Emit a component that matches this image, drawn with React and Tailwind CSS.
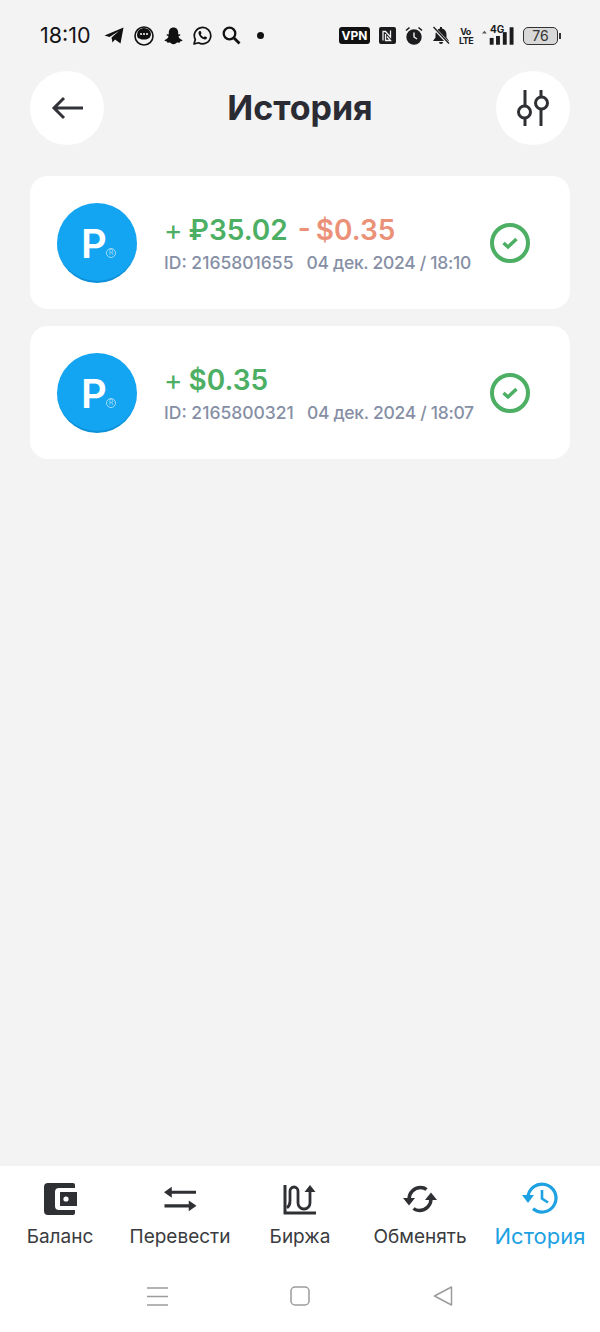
const dark = "#2f3034";

function Telegram() {
  return (
    <svg width="20" height="17" viewBox="0 0 20 17">
      <path d="M0.5 8.500 19.500 0.500 16.500 16.500 11 12.500 8.500 15.500 7.500 10.500 15 4 5.500 10Z" fill="#111" />
    </svg>
  );
}
function ChatBubble() {
  return (
    <svg width="20" height="20" viewBox="0 0 20 20">
      <circle cx="10" cy="10" r="9" fill="none" stroke="#111" strokeWidth="1.600" />
      <path d="M3 9a7 6.500 0 0 1 14-1c0 3-2 5-5 5.400-2.500.4-5 .2-6.500-1C4 12.500 3 11 3 9Z" fill="#111" />
      <circle cx="7" cy="8" r="1" fill="#fff" />
      <circle cx="10" cy="8" r="1" fill="#fff" />
      <circle cx="13" cy="8" r="1" fill="#fff" />
    </svg>
  );
}
function Snap() {
  return (
    <svg width="19" height="18" viewBox="0 0 19 18">
      <path d="M9.500 .5c3 0 4.700 2.200 4.700 5v2l1.600-.3c.7 0 .8.900.2 1.200l-1.500.8c.4 1.700 1.700 3 3.700 3.700.5.300.3.900-.3 1l-1.800.5-.5 1.300-2.200-.2c-1.100.2-2 1.800-3.900 1.800s-2.800-1.600-3.900-1.800l-2.200.2-.5-1.300-1.800-.5c-.6-.1-.8-.7-.3-1 2-.7 3.300-2 3.700-3.700l-1.500-.8c-.6-.3-.5-1.200.2-1.200l1.600.3v-2c0-2.800 1.700-5 4.700-5Z" fill="#111" />
    </svg>
  );
}
function WhatsApp() {
  return (
    <svg width="19" height="19" viewBox="0 0 19 19">
      <path d="M1 18l1.300-4.500A8.200 8.200 0 1 1 5.500 16.800Z" fill="none" stroke="#111" strokeWidth="1.700" strokeLinejoin="round" />
      <path d="M6.500 5c-.8.500-1.200 1.500-.9 2.800.6 2.400 2.800 4.800 5.300 5.500 1.300.4 2.400 0 2.900-.9l.2-1.100-2.200-1.100-1 1.100c-1.300-.5-2.500-1.700-3.100-3l.9-1-1-2.300Z" fill="#111" />
    </svg>
  );
}
function Search() {
  return (
    <svg width="19" height="19" viewBox="0 0 19 19" fill="none" stroke="#111">
      <circle cx="7.500" cy="7.500" r="5.800" strokeWidth="2.300" />
      <path d="M12 12l5.500 5.500" strokeWidth="2.800" />
    </svg>
  );
}
function NfcIcon() {
  return (
    <svg width="17" height="17" viewBox="0 0 17 17">
      <rect width="17" height="17" rx="2" fill="#1c1c1e" />
      <path d="M4 13.500V4.500h2.500l5 5.500V3.500M6.500 7v6.500h5L8 9.500" fill="none" stroke="#f3f3f4" strokeWidth="1.300" />
    </svg>
  );
}
function Alarm() {
  return (
    <svg width="18" height="19" viewBox="0 0 18 19">
      <circle cx="9" cy="11" r="7.700" fill="#1c1c1e" />
      <path d="M1 4.500 4.500 1.500M17 4.500 13.500 1.500" stroke="#1c1c1e" strokeWidth="1.600" />
      <path d="M9 6.500V11l3 2" fill="none" stroke="#f3f3f4" strokeWidth="1.400" />
    </svg>
  );
}
function BellOff() {
  return (
    <svg width="18" height="19" viewBox="0 0 18 19">
      <path d="M8 1h2v1.500c3 .7 4.500 3 4.500 6v3l2.500 3.500H1l2.500-3.500v-3c0-3 1.500-5.300 4.500-6Z" fill="#1c1c1e" />
      <path d="M7 16h4a2 2 0 0 1-4 0Z" fill="#1c1c1e" />
      <path d="M1.500 1.500l15 16" stroke="#f3f3f4" strokeWidth="3.200" />
      <path d="M1.500 1l15.500 16.500" stroke="#1c1c1e" strokeWidth="1.300" />
    </svg>
  );
}
function Signal() {
  return (
    <svg width="33" height="18" viewBox="0 0 34 18">
      <path d="M1 6.500 3.500 3.500 6 6.500Z" fill="#555" />
      <rect x="9" y="11" width="4" height="7" fill="#1c1c1e" />
      <rect x="15.500" y="9" width="4" height="9" fill="#1c1c1e" />
      <rect x="22.500" y="5" width="4" height="13" fill="#1c1c1e" />
      <rect x="29.500" y="0" width="4" height="18" fill="#1c1c1e" />
    </svg>
  );
}
function Wallet() {
  return (
    <svg width="33" height="32" viewBox="0 0 33 32">
      <path d="M4 0h25a2 2 0 0 1 2 2v3H15a4 4 0 0 0-4 4v14a4 4 0 0 0 4 4h16v3a2 2 0 0 1-2 2H4a4 4 0 0 1-4-4V4a4 4 0 0 1 4-4Z" fill={dark} />
      <path d="M16 9h17v14H16Z" fill={dark} />
      <circle cx="22" cy="16" r="2.600" fill="#fff" />
    </svg>
  );
}
function Transfer() {
  return (
    <svg width="33" height="28" viewBox="0 0 34 28" fill={dark}>
      <path d="M0 7 8 1.500v4h25v3.200H8v4Z" />
      <path d="M33.500 21 25.500 15.500v4H.5v3.200h25v4Z" />
    </svg>
  );
}
function Exchange() {
  return (
    <svg width="34" height="31" viewBox="0 0 34 31" fill="none" stroke={dark} strokeWidth="2.800">
      <path d="M2 1v28h31" strokeWidth="3" />
      <path d="M4 24c2-1.500 3-4 3-7V7a4 4 0 0 1 8 0v12a6 6 0 0 0 12 0V6" />
      <path d="M21.500 8 27 1l5.500 7Z" fill={dark} stroke="none" />
    </svg>
  );
}
function Swap() {
  return (
    <svg width="36" height="30" viewBox="0 0 36 30" fill="none" stroke={dark} strokeWidth="3.400">
      <path d="M7 15c0-6 5-11.500 11.500-11.500 2.500 0 4.500.7 6 2" />
      <path d="M29 15c0 6-5 11.500-11.500 11.500-2.500 0-4.500-.7-6-2" />
      <path d="M1 15h12l-6 7.500Z" fill={dark} stroke="none" transform="translate(0 -1)" />
      <path d="M23 15h12l-6-7.500Z" fill={dark} stroke="none" transform="translate(0 1)" />
    </svg>
  );
}
function HistoryIcon() {
  return (
    <svg className="-mt-[3px]" width="36" height="32" viewBox="0 0 36 32" fill="none" stroke="#1da1e3" strokeWidth="3.200">
      <path d="M6 16a14 14 0 1 1 5 10.800" />
      <path d="M0 13h12l-6 8Z" fill="#1da1e3" stroke="none" />
      <path d="M20 8v8.500l6 4" strokeWidth="2.600" />
    </svg>
  );
}
function SoftKeys() {
  return (
    <div className="h-[66px] flex items-start pt-[20px] pl-[147px]">
      <svg width="21" height="21" viewBox="0 0 21 21" stroke="#9c9c9c" strokeWidth="1.500">
        <path d="M0 2h21M0 10.500h21M0 19h21" />
      </svg>
      <svg className="ml-[122px]" width="20" height="20" viewBox="0 0 20 20" fill="none" stroke="#9c9c9c" strokeWidth="1.500">
        <rect x="1" y="1" width="18" height="18" rx="4" />
      </svg>
      <svg className="ml-[123px]" width="20" height="20" viewBox="0 0 20 20" fill="none" stroke="#9c9c9c" strokeWidth="1.500">
        <path d="M1.500 10 18.500 1v18Z" strokeLinejoin="round" />
      </svg>
    </div>
  );
}

function NavItem({ icon, label, active }) {
  return (
    <div className="flex-1 flex flex-col items-center">
      <div className="h-[36px] flex items-center justify-center">{icon}</div>
      <div className={active ? "mt-[4px] text-[22px] leading-[30px] text-[#1da1e3]" : "mt-[7px] text-[19px] leading-[26px] text-[#3a3b3e]"}>{label}</div>
    </div>
  );
}

function Card({ plusAmount, minusAmount, id, date }) {
  return (
    <div className="h-[133px] rounded-[18px] bg-white flex items-center pl-[27px] pr-[40px]">
      <div className="relative w-[80px] h-[80px] rounded-full bg-[#13a5f2] border-b-2 border-[#0d90d8] flex items-center justify-center shrink-0">
        <span className="text-white text-[40px] font-semibold leading-none mr-[6px] mt-[5px]">P</span>
        <span className="absolute left-[49px] top-[45px] w-[10px] h-[10px] rounded-full border border-[#a5dcf9] text-[#a5dcf9] text-[7px] leading-[8px] text-center">R</span>
      </div>
      <div className="ml-[27px] mt-[3px]">
        <div className="text-[28px] leading-[34px] font-semibold text-[#4caf63] whitespace-nowrap">
          <span className="font-normal mr-[6px]">+</span>{plusAmount}
          {minusAmount && <span className="text-[#ea9178] ml-[10px] [word-spacing:-2px]">- {minusAmount}</span>}
        </div>
        <div className="mt-[4px] text-[17.500px] leading-[24px] font-medium text-[#868fa5] whitespace-nowrap">
          {id}<span className="ml-[13px] tracking-[-0.3px]">{date}</span>
        </div>
      </div>
      <div className="ml-auto w-[40px] h-[40px] rounded-full border-4 border-[#4caf63] flex items-center justify-center shrink-0">
        <svg width="18" height="14" viewBox="0 0 18 14" fill="none" stroke="#4caf63" strokeWidth="3.500">
          <path d="M2.500 7 7 11 15.500 3" />
        </svg>
      </div>
    </div>
  );
}

export default function App() {
  return (
    <div className="w-[600px] h-[1332px] flex flex-col bg-[#f3f3f4] text-[#2a2b33]" style={{ fontFamily: "Inter, 'Noto Sans', sans-serif" }}>
      <div className="h-[71px] shrink-0 flex items-center justify-between pl-[40px] pr-[39px]">
        <div className="flex items-center gap-[10px]">
          <span className="text-[21.500px] leading-none text-[#141414] mr-[3px]">18:10</span>
          <Telegram />
          <ChatBubble />
          <Snap />
          <WhatsApp />
          <Search />
          <span className="w-[7px] h-[7px] rounded-full bg-[#111] ml-[6px]" />
        </div>
        <div className="flex items-center gap-[9px]">
          <span className="w-[31px] h-[17px] rounded-[3px] bg-[#111] text-white text-[12px] leading-[17px] font-bold text-center">VPN</span>
          <NfcIcon />
          <Alarm />
          <BellOff />
          <span className="text-[9px] leading-[9px] tracking-[-0.5px] font-bold text-center text-[#1c1c1e] w-[13px]">Vo<br />LTE</span>
          <span className="relative">
            <Signal />
            <span className="absolute left-[9px] -top-[3px] text-[10px] leading-none font-bold text-[#1c1c1e]">4G</span>
          </span>
          <span className="flex items-center">
            <span className="w-[35px] h-[18px] rounded-[5px] border border-[#333] bg-[#d8d8d8] text-[14px] leading-[16px] text-center text-[#333]">76</span>
            <span className="w-[2px] h-[6px] bg-[#333] ml-px" />
          </span>
        </div>
      </div>

      <div className="shrink-0 flex items-center justify-between px-[30px]">
        <div className="w-[74px] h-[74px] rounded-full bg-white flex items-center justify-center">
          <svg width="32" height="24" viewBox="0 0 32 24" fill="none" stroke="#33343a" strokeWidth="3">
            <path d="M32 12H3M13 2 3 12l10 10" />
          </svg>
        </div>
        <h1 className="text-[34px] leading-[40px] font-bold text-[#2a2b33]">История</h1>
        <div className="w-[74px] h-[74px] rounded-full bg-white flex items-center justify-center">
          <svg width="34" height="38" viewBox="0 0 34 38" fill="none" stroke="#2f3034" strokeWidth="3">
            <path d="M9 1v16M9 29v8M25 1v7M25 20v17" />
            <circle cx="8.500" cy="23" r="6" />
            <circle cx="25.500" cy="14" r="6" />
          </svg>
        </div>
      </div>

      <div className="mt-[31px] px-[30px] flex flex-col gap-[17px]">
        <Card plusAmount="₽35.02" minusAmount="$0.35" id="ID: 2165801655" date="04 дек. 2024 / 18:10" />
        <Card plusAmount="$0.35" id="ID: 2165800321" date="04 дек. 2024 / 18:07" />
      </div>

      <div className="mt-auto bg-white h-[166px] flex flex-col">
        <div className="flex-1 flex pt-[15px] items-start">
          <NavItem icon={<Wallet />} label="Баланс" />
          <NavItem icon={<Transfer />} label="Перевести" />
          <NavItem icon={<Exchange />} label="Биржа" />
          <NavItem icon={<Swap />} label="Обменять" />
          <NavItem icon={<HistoryIcon />} label="История" active />
        </div>
        <SoftKeys />
      </div>
    </div>
  );
}
